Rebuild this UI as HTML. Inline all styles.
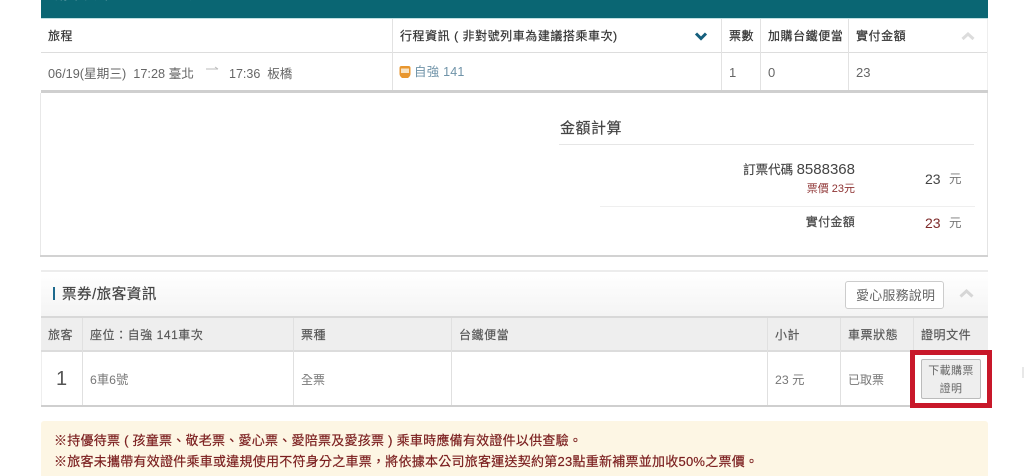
<!DOCTYPE html>
<html lang="zh-Hant">
<head>
<meta charset="utf-8">
<style>
html,body{margin:0;padding:0;background:#fff;}
body{width:1024px;height:476px;overflow:hidden;position:relative;font-family:"Liberation Sans","Noto Sans CJK TC",sans-serif;color:#666;}
.a{position:absolute;white-space:nowrap;}
.l{position:absolute;}
.h{font-size:12px;line-height:16px;color:#333;letter-spacing:.55px;-webkit-text-stroke:.2px #333;}
.t{font-size:12px;line-height:16px;color:#666;}
.m{font-size:12px;line-height:16px;color:#555;letter-spacing:.55px;-webkit-text-stroke:.15px #555;}
.w{font-size:13px;line-height:20px;color:#7b1f1f;letter-spacing:.25px;-webkit-text-stroke:.2px #7b1f1f;}
</style>
</head>
<body>
<!-- top teal bar -->
<div class="l" style="left:41px;top:0;width:947px;height:18px;background:#0a6673;overflow:hidden;">
  <div class="a" style="left:14px;top:-13px;font-size:13px;line-height:16px;letter-spacing:1.600px;color:#cfe3e6;">購票資訊 8588368 明細</div>
</div>
<div class="l" style="left:41px;top:18px;width:947px;height:1px;background:#bfe0e2;"></div>

<!-- table 1 -->
<div class="l" style="left:41px;top:52px;width:947px;height:1px;background:#ddd;"></div>
<div class="l" style="left:41px;top:90px;width:947px;height:3px;background:#cfcfcf;"></div>
<div class="l" style="left:392px;top:19px;width:1px;height:71px;background:#e2e2e2;"></div>
<div class="l" style="left:721px;top:19px;width:1px;height:71px;background:#e2e2e2;"></div>
<div class="l" style="left:760px;top:19px;width:1px;height:71px;background:#e2e2e2;"></div>
<div class="l" style="left:848px;top:19px;width:1px;height:71px;background:#e2e2e2;"></div>
<div class="l" style="left:987px;top:19px;width:1px;height:71px;background:#eee;"></div>

<div class="a h" style="left:48px;top:28px;">旅程</div>
<div class="a h" style="left:400px;top:28px;">行程資訊 ( 非對號列車為建議搭乘車次)</div>
<svg class="l" style="left:694px;top:31px;" width="14" height="11" viewBox="0 0 14 11"><path d="M2 2.500 L7 7.500 L12 2.500" fill="none" stroke="#155f7d" stroke-width="3"/></svg>
<div class="a h" style="left:729px;top:28px;">票數</div>
<div class="a h" style="left:768px;top:28px;">加購台鐵便當</div>
<div class="a h" style="left:856px;top:28px;">實付金額</div>
<svg class="l" style="left:961px;top:31px;" width="14" height="10" viewBox="0 0 14 10"><path d="M1.500 8 L7 3 L12.500 8" fill="none" stroke="#dcdcdc" stroke-width="3"/></svg>

<div class="a t" style="left:48px;top:66px;font-size:12.700px;">06/19(星期三)&nbsp; 17:28 臺北</div>
<svg class="l" style="left:205px;top:65px;" width="15" height="8" viewBox="0 0 15 8"><path d="M1 4 H13 M10 2 L13 4" fill="none" stroke="#bbb" stroke-width="1"/></svg>
<div class="a t" style="left:229px;top:66px;font-size:12.500px;">17:36&nbsp; 板橋</div>
<svg class="l" style="left:399px;top:65px;" width="12" height="14" viewBox="0 0 12 14"><path d="M2.500 1 H9.500 Q11.500 1 11.500 3 V9 Q11.500 11 9 13 H3 Q.5 11 .5 9 V3 Q.5 1 2.500 1 Z" fill="#e8962e"/><rect x="2" y="3.500" width="8" height="4.500" fill="#f7e3c4"/></svg>
<div class="a t" style="left:414px;top:64px;color:#6f93a8;font-size:12.500px;letter-spacing:.2px;">自強 141</div>
<div class="a t" style="left:729px;top:65px;font-size:13px;">1</div>
<div class="a t" style="left:768px;top:65px;font-size:13px;">0</div>
<div class="a t" style="left:856px;top:65px;font-size:13px;">23</div>

<!-- amount panel -->
<div class="l" style="left:40px;top:93px;width:1px;height:162px;background:#e8e8e8;"></div>
<div class="l" style="left:987px;top:93px;width:1px;height:162px;background:#e4e4e4;"></div>
<div class="l" style="left:40px;top:255px;width:948px;height:2px;background:#d2d2d2;"></div>
<div class="a" style="left:560px;top:120px;font-size:15px;line-height:18px;color:#444;letter-spacing:.5px;-webkit-text-stroke:.2px #444;">金額計算</div>
<div class="l" style="left:559px;top:144px;width:415px;height:1px;background:#e6e6e6;"></div>
<div class="a" style="right:169px;top:161px;font-size:12.500px;line-height:18px;color:#444;"><span style="-webkit-text-stroke:.15px #444;">訂票代碼</span> <span style="font-size:15px;">8588368</span></div>
<div class="a" style="right:169px;top:181px;font-size:11px;line-height:16px;color:#8e3333;">票價 23元</div>
<div class="a" style="left:925px;top:170px;font-size:14px;line-height:18px;color:#444;">23</div>
<div class="a" style="left:949px;top:171px;font-size:12.500px;line-height:17px;color:#777;">元</div>
<div class="l" style="left:600px;top:206px;width:375px;height:1px;background:#efefef;"></div>
<div class="a" style="right:169px;top:214px;font-size:12px;line-height:16px;color:#444;letter-spacing:.3px;-webkit-text-stroke:.15px #444;">實付金額</div>
<div class="a" style="left:925px;top:214px;font-size:14px;line-height:18px;color:#7d2a2a;">23</div>
<div class="a" style="left:949px;top:215px;font-size:12.500px;line-height:17px;color:#777;">元</div>

<!-- section 2 header -->
<div class="l" style="left:41px;top:270px;width:947px;height:2px;background:#ececec;"></div>
<div class="l" style="left:41px;top:272px;width:947px;height:44px;background:linear-gradient(#fff,#f4f4f4);"></div>
<div class="l" style="left:53px;top:287px;width:2px;height:13px;background:#1d6a8e;"></div>
<div class="a" style="left:62px;top:286px;font-size:14.500px;line-height:18px;color:#444;letter-spacing:.55px;-webkit-text-stroke:.2px #444;">票券/旅客資訊</div>
<div class="l" style="left:845px;top:281px;width:99px;height:28px;box-sizing:border-box;border:1px solid #ccc;border-radius:3px;background:#fff;"></div>
<div class="a" style="left:856px;top:287px;font-size:13px;line-height:17px;color:#666;letter-spacing:.2px;">愛心服務說明</div>
<svg class="l" style="left:959px;top:288px;" width="15" height="11" viewBox="0 0 15 11"><path d="M1.500 8.500 L7.500 3 L13.500 8.500" fill="none" stroke="#d6d6d6" stroke-width="3"/></svg>

<!-- table 2 -->
<div class="l" style="left:41px;top:316px;width:947px;height:36px;background:#eee;border-top:2px solid #d8d8d8;border-bottom:2px solid #dcdcdc;box-sizing:border-box;"></div>
<div class="l" style="left:41px;top:405px;width:947px;height:2px;background:#cfcfcf;"></div>
<div class="l" style="left:41px;top:352px;width:1px;height:53px;background:#eee;"></div>
<div class="l" style="left:82px;top:318px;width:1px;height:87px;background:#e0e0e0;"></div>
<div class="l" style="left:293px;top:318px;width:1px;height:87px;background:#e0e0e0;"></div>
<div class="l" style="left:451px;top:318px;width:1px;height:87px;background:#e0e0e0;"></div>
<div class="l" style="left:767px;top:318px;width:1px;height:87px;background:#e0e0e0;"></div>
<div class="l" style="left:840px;top:318px;width:1px;height:87px;background:#e0e0e0;"></div>
<div class="l" style="left:913px;top:318px;width:1px;height:34px;background:#e0e0e0;"></div>

<div class="a m" style="left:48px;top:327px;">旅客</div>
<div class="a m" style="left:90px;top:327px;">座位：自強 141車次</div>
<div class="a m" style="left:301px;top:327px;">票種</div>
<div class="a m" style="left:459px;top:327px;">台鐵便當</div>
<div class="a m" style="left:775px;top:327px;">小計</div>
<div class="a m" style="left:848px;top:327px;">車票狀態</div>
<div class="a m" style="left:921px;top:327px;">證明文件</div>

<div class="a" style="left:56px;top:368px;font-size:20px;line-height:23px;color:#555;">1</div>
<div class="a t" style="left:90px;top:372px;color:#777;font-size:12.300px;">6車6號</div>
<div class="a t" style="left:301px;top:372px;color:#777;">全票</div>
<div class="a t" style="left:775px;top:372px;color:#777;font-size:12.300px;">23 元</div>
<div class="a t" style="left:848px;top:372px;color:#777;">已取票</div>

<!-- button & red box -->
<div class="l" style="left:921px;top:359px;width:60px;height:40px;box-sizing:border-box;border:1px solid #bbb;border-radius:2px;background:#eee;"></div>
<div class="a" style="left:921px;top:362px;width:60px;text-align:center;font-size:11px;line-height:18px;color:#666;letter-spacing:.4px;white-space:normal;">下載購票<br>證明</div>
<div class="l" style="left:910px;top:350px;width:82px;height:58px;box-sizing:border-box;border:5px solid #c8182a;"></div>
<div class="l" style="left:1022px;top:367px;width:2px;height:11px;background:#e8e8e8;"></div>

<!-- notice -->
<div class="l" style="left:41px;top:421px;width:947px;height:55px;background:#fdf6e4;border-radius:3px 3px 0 0;"></div>
<div class="a w" style="left:54px;top:431px;">※持優待票 ( 孩童票、敬老票、愛心票、愛陪票及愛孩票 ) 乘車時應備有效證件以供查驗。</div>
<div class="a w" style="left:54px;top:452px;">※旅客未攜帶有效證件乘車或違規使用不符身分之車票，將依據本公司旅客運送契約第23點重新補票並加收50%之票價。</div>
</body>
</html>
